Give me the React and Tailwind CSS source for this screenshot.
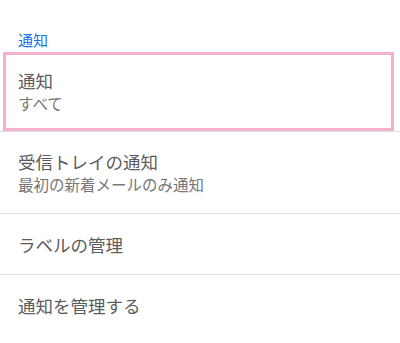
import React from 'react';

const FONT = { fontFamily: '"Noto Sans CJK JP", "Noto Sans", sans-serif' };

const ITEMS = [
  { title: '受信トレイの通知', sub: '最初の新着メールのみ通知', h: 'h-[81px]' },
  { title: 'ラベルの管理', h: 'h-[60px]' },
  { title: '通知を管理する', h: 'h-[60px]' },
];

export default function App() {
  return (
    <div className="w-[400px] h-[343px] bg-white overflow-hidden" style={FONT}>
      {/* section header */}
      <div className="pt-[29px] pb-[1px] pl-[18px] text-[15px] leading-[22px] text-[#1a73e8]">通知</div>

      {/* highlighted row */}
      <div className="ml-[3px] w-[391px] h-[79px] border-[3px] border-[#f5b0cb] flex flex-col justify-center pl-[12px]">
        <div className="text-[17.5px] leading-[23px] text-[#5c5c5c]">通知</div>
        <div className="text-[15.5px] leading-[23px] text-[#777]">すべて</div>
      </div>
      <div className="h-px bg-[#e2e2e2]" />

      {ITEMS.map((it, i) => (
        <div key={i}>
          <div className={`${it.h} flex flex-col justify-center pl-[18px]`}>
            <div className="text-[17.5px] leading-[23px] text-[#5c5c5c]">{it.title}</div>
            {it.sub && <div className="text-[15.5px] leading-[23px] text-[#777]">{it.sub}</div>}
          </div>
          {i < ITEMS.length - 1 && <div className="h-px bg-[#e2e2e2]" />}
        </div>
      ))}
    </div>
  );
}
